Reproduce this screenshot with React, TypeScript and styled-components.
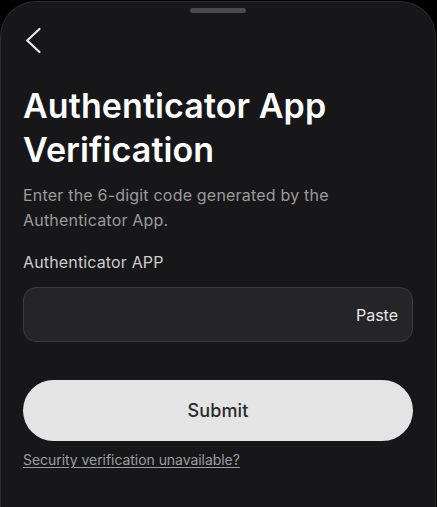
import React, { useState } from 'react';
import styled, { createGlobalStyle } from 'styled-components';

const GlobalStyle = createGlobalStyle`
  html, body {
    margin: 0;
    padding: 0;
    background: #000;
  }
  body {
    font-family: Inter, "Noto Sans", "Liberation Sans", sans-serif;
    -webkit-font-smoothing: antialiased;
  }
`;

const Sheet = styled.div`
  box-sizing: border-box;
  width: 436px;
  min-height: 506px;
  margin-top: 1px;
  padding: 0 22px 40px;
  display: flex;
  flex-direction: column;
  background: #171719;
  border: 1px solid #2c2c2e;
  border-bottom: none;
  border-radius: 36px 36px 0 0;
`;

const Grabber = styled.div`
  align-self: center;
  width: 56px;
  height: 5px;
  margin-top: 6px;
  border-radius: 3px;
  background: #4b4b4d;
`;

const BackButton = styled.button`
  align-self: flex-start;
  margin: 13px 0 0;
  padding: 0;
  width: 20px;
  height: 28px;
  border: none;
  background: transparent;
  cursor: pointer;
  svg {
    display: block;
  }
`;

const Title = styled.h1`
  margin: 30px 0 0;
  font-size: 34px;
  line-height: 44px;
  font-weight: 600;
  letter-spacing: 0.1px;
  color: #fff;
`;

const Description = styled.p`
  margin: 11px 0 0;
  font-size: 16px;
  line-height: 25px;
  letter-spacing: 0.2px;
  color: #9b9b9d;
`;

const FieldLabel = styled.label`
  margin-top: 19px;
  font-size: 16px;
  line-height: 20px;
  letter-spacing: 0.15px;
  color: #cdcdcf;
`;

const InputBox = styled.div`
  box-sizing: border-box;
  margin-top: 15px;
  height: 55px;
  display: flex;
  align-items: center;
  padding: 0 14px 0 16px;
  background: #252527;
  border: 1px solid #3b3b3d;
  border-radius: 13px;
`;

const CodeInput = styled.input`
  flex: 1;
  min-width: 0;
  border: none;
  outline: none;
  background: transparent;
  color: #fff;
  font-family: inherit;
  font-size: 16px;
`;

const PasteButton = styled.button`
  border: none;
  background: transparent;
  padding: 0;
  font-family: inherit;
  font-size: 16px;
  color: #e6e6e8;
  cursor: pointer;
`;

const SubmitButton = styled.button`
  margin-top: 38px;
  height: 61px;
  border: none;
  border-radius: 31px;
  background: #e4e4e4;
  color: #2a2a2c;
  font-family: inherit;
  font-size: 18px;
  font-weight: 500;
  letter-spacing: 0.1px;
  cursor: pointer;
`;

const HelpLink = styled.a`
  align-self: flex-start;
  margin-top: 10px;
  font-size: 14px;
  line-height: 18px;
  letter-spacing: -0.05px;
  color: #9d9d9f;
  text-decoration: underline;
  text-underline-offset: 2px;
  cursor: pointer;
`;

const ChevronLeft = () => (
  <svg width="20" height="28" viewBox="0 0 20 28" fill="none">
    <path d="M16.5 3 L4.2 14.5 L16.5 26" stroke="#ececec" strokeWidth="2.2" strokeLinecap="round" strokeLinejoin="round" />
  </svg>
);

export default function App() {
  const [code, setCode] = useState('');

  return (
    <>
      <GlobalStyle />
      <Sheet>
        <Grabber />
        <BackButton aria-label="Back">
          <ChevronLeft />
        </BackButton>
        <Title>
          Authenticator App
          <br />
          Verification
        </Title>
        <Description>
          Enter the 6-digit code generated by the
          <br />
          Authenticator App.
        </Description>
        <FieldLabel htmlFor="otp">Authenticator APP</FieldLabel>
        <InputBox>
          <CodeInput id="otp" value={code} onChange={(e) => setCode(e.target.value)} />
          <PasteButton>Paste</PasteButton>
        </InputBox>
        <SubmitButton>Submit</SubmitButton>
        <HelpLink>Security verification unavailable?</HelpLink>
      </Sheet>
    </>
  );
}
